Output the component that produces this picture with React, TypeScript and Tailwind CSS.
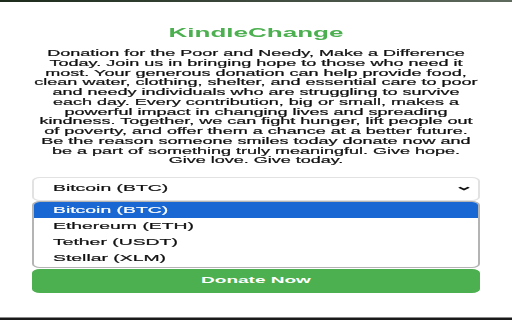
import React from 'react';

const lines = [
  'Donation for the Poor and Needy, Make a Difference',
  'Today. Join us in bringing hope to those who need it',
  'most. Your generous donation can help provide food,',
  'clean water, clothing, shelter, and essential care to poor',
  'and needy individuals who are struggling to survive',
  'each day. Every contribution, big or small, makes a',
  'powerful impact in changing lives and spreading',
  'kindness. Together, we can fight hunger, lift people out',
  'of poverty, and offer them a chance at a better future.',
  'Be the reason someone smiles today donate now and',
  'be a part of something truly meaningful. Give hope.',
  'Give love. Give today.',
];

const coins = ['Bitcoin (BTC)', 'Ethereum (ETH)', 'Tether (USDT)', 'Stellar (XLM)'];

const App: React.FC = () => {
  return (
    <div className="w-[512px] h-[320px] overflow-hidden bg-white flex flex-col font-['Liberation_Sans',Arial,sans-serif]">
      <div className="h-[2px] bg-gradient-to-r from-[#1d2b1d] to-[#5f6b5f]" />

      {/* the screenshot is stretched sideways, so the content is drawn at half width */}
      <div className="w-[256px] flex-1 origin-left scale-x-200 px-[16px] flex flex-col">
        <h1 className="mt-[22.5px] text-center text-[13px] leading-[16px] font-bold text-[#4caf50]">
          KindleChange
        </h1>

        <p className="mt-[8.5px] text-center text-[9px] leading-[9.75px] text-[#111] whitespace-nowrap [-webkit-text-stroke:0.2px_#111]">
          {lines.map((l, i) => (
            <React.Fragment key={i}>
              {l}
              {i < lines.length - 1 && <br />}
            </React.Fragment>
          ))}
        </p>

        {/* select, shown open */}
        <div className="mt-[10.5px] h-[24px] border border-[#e2e2e2] rounded-[4px] flex items-center justify-between pl-[9.5px] pr-[4.5px] text-[9.7px] text-[#111] [-webkit-text-stroke:0.2px_#111]">
          <span>Bitcoin (BTC)</span>
          <svg width="6" height="5" viewBox="0 0 6 5">
            <polyline points="0.6,1.2 3,3.6 5.4,1.2" fill="none" stroke="#111" strokeWidth="1.4" />
          </svg>
        </div>

        <div className="h-[67px] border border-[#b4b4b4] rounded-[4px] overflow-hidden flex flex-col bg-white">
          {coins.map((c, i) => (
            <div
              key={c}
              className={
                i === 0
                  ? 'h-[16.25px] leading-[16.25px] pl-[9.5px] text-[9.7px] bg-[#1967d2] text-white [-webkit-text-stroke:0.2px_#fff]'
                  : 'h-[16.25px] leading-[16.25px] pl-[9.5px] text-[9.7px] text-[#111] [-webkit-text-stroke:0.2px_#111]'
              }
            >
              {c}
            </div>
          ))}
        </div>

        <button className="mt-[1px] h-[24px] w-full rounded-[4px] bg-[#4caf50] text-white text-[9.5px] font-bold">
          Donate Now
        </button>
      </div>

      <div className="h-[1px] bg-[#8a8a8a]" />
      <div className="h-[2px] bg-[#1a1a1a]" />
    </div>
  );
};

export default App;
